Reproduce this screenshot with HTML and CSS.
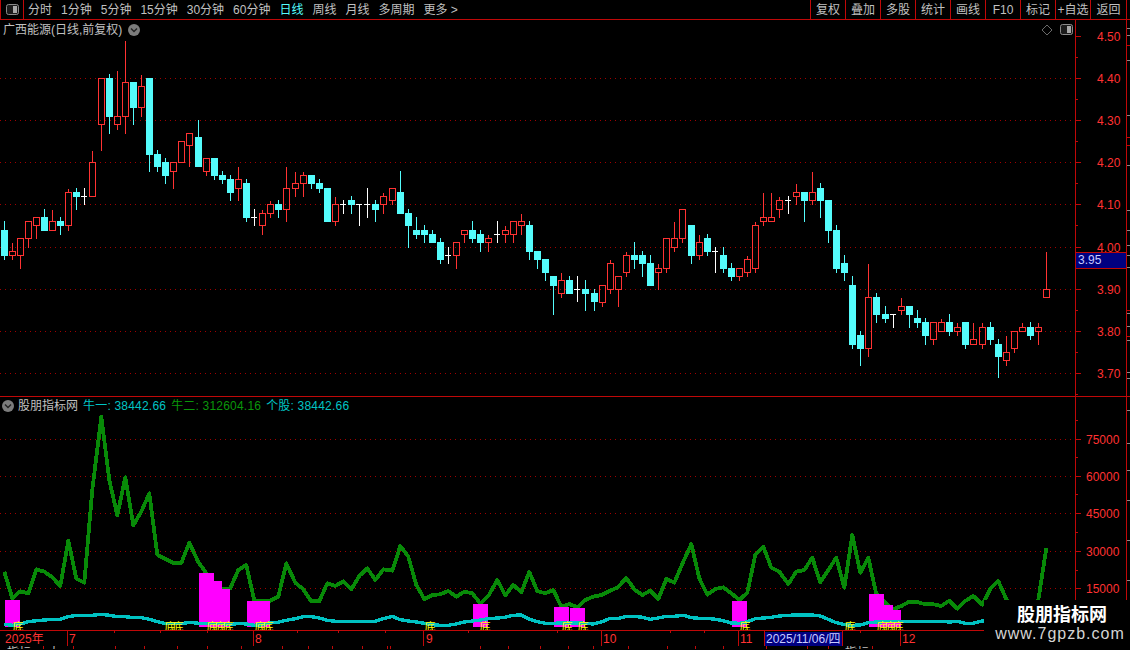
FILE: index.html
```html
<!DOCTYPE html>
<html lang="zh-CN">
<head>
<meta charset="utf-8">
<title>广西能源</title>
<link rel="stylesheet" href="styles.css">
</head>
<body>
<div class="app">
  <header class="toolbar">
    <div class="layout-cell">
      <svg class="layout-icon" width="13" height="11" viewBox="0 0 13 11"><rect x="0.5" y="0.5" width="12" height="10" rx="2" class="ic-frame"/><rect x="7" y="2" width="4" height="7" class="ic-fill"/></svg>
    </div>
    <nav class="periods">
      <span>分时</span><span>1分钟</span><span>5分钟</span><span>15分钟</span><span>30分钟</span><span>60分钟</span><span class="active">日线</span><span>周线</span><span>月线</span><span>多周期</span><span>更多 &gt;</span>
    </nav>
    <nav class="actions">
      <span>复权</span><span>叠加</span><span>多股</span><span>统计</span><span>画线</span><span>F10</span><span>标记</span><span>+自选</span><span>返回</span>
    </nav>
  </header>

  <section class="pane pane-price">
    <svg id="price-plot" class="plot" width="1075" height="376" viewBox="0 20 1075 376"></svg>
    <svg id="price-axis" class="axis" width="55" height="376" viewBox="1075 20 55 376"></svg>
    <div class="pane-title price-title">
      <span>广西能源(日线,前复权)</span>
      <svg class="chev" width="12" height="12" viewBox="0 0 12 12"><circle cx="6" cy="6" r="6" class="chev-bg"/><path d="M3 4.5 L6 7.5 L9 4.5" class="chev-line"/></svg>
    </div>
    <div class="pane-tools">
      <svg width="10" height="10" viewBox="0 0 10 10"><path d="M5 0 L10 5 L5 10 L0 5 Z" class="ic-diamond"/></svg>
      <svg width="13" height="11" viewBox="0 0 13 11"><rect x="0.5" y="0.5" width="12" height="10" rx="2" class="ic-frame"/><rect x="7" y="2" width="4" height="7" class="ic-fill"/></svg>
    </div>
    <div class="price-tag">3.95</div>
  </section>

  <section class="pane pane-ind">
    <svg id="ind-plot" class="plot" width="1075" height="233" viewBox="0 397 1075 233"></svg>
    <svg id="ind-axis" class="axis" width="55" height="233" viewBox="1075 397 55 233"></svg>
    <div class="pane-title ind-title">
      <svg class="chev" width="12" height="12" viewBox="0 0 12 12"><circle cx="6" cy="6" r="6" class="chev-bg"/><path d="M3 4.5 L6 7.5 L9 4.5" class="chev-line"/></svg>
      <span class="ind-name">股朋指标网</span>
      <span class="v-cyan">牛一: 38442.66</span>
      <span class="v-green">牛二: 312604.16</span>
      <span class="v-cyan">个股: 38442.66</span>
    </div>
  </section>

  <svg id="time-row" class="time-row" width="1130" height="15" viewBox="0 631 1130 15"></svg>
  <svg id="tab-row" class="tab-row" width="1130" height="3" viewBox="0 647 1130 3"></svg>

  <aside class="watermark">
    <div class="wm-name">股朋指标网</div>
    <div class="wm-url">www.7gpzb.com</div>
  </aside>
</div>
<script src="script.js"></script>
</body>
</html>
```
FILE: styles.css
```css
* { box-sizing: border-box; }
html, body { margin: 0; padding: 0; background: #000; }
body {
  width: 1130px;
  height: 650px;
  overflow: hidden;
  font-family: "Liberation Sans", "Noto Sans CJK SC", sans-serif;
  font-size: 12px;
  color: #c0c0c0;
}
.app { position: relative; width: 1130px; height: 650px; display: flex; flex-direction: column; background: #000; overflow: hidden; }

/* toolbar */
.toolbar { display: flex; align-items: stretch; height: 20px; border-bottom: 1px solid #c00808; padding-right: 3px; flex: none; }
.layout-cell { width: 24px; display: flex; align-items: center; justify-content: center; border-left: 1px solid #c00808; border-right: 1px solid #c00808; }
.periods { display: flex; align-items: center; gap: 9px; padding-left: 4px; padding-top: 2px; flex: 1; white-space: nowrap; line-height: 17px; }
.periods .active { color: #54fcfc; }
.actions { display: flex; line-height: 21px; }
.actions span { width: 35px; text-align: center; border-left: 1px solid #c00808; white-space: nowrap; }
.actions span:last-child { width: 37px; border-right: 1px solid #c00808; }
.ic-frame { fill: #1c1c1c; stroke: #8a8a8a; }
.ic-fill { fill: #a8a8a8; }
.ic-diamond { fill: none; stroke: #6a6a6a; }

/* panes */
.pane { position: relative; display: flex; flex: none; border-bottom: 1px solid #c00808; }
.pane-price { height: 377px; }
.pane-ind { height: 234px; }
.plot, .axis { display: block; flex: none; }
.pane-title { position: absolute; display: flex; align-items: center; line-height: 14px; white-space: nowrap; }
.price-title { left: 3px; top: 3px; gap: 6px; }
.ind-title { left: 2px; top: 2px; }
.ind-name { margin-left: 4px; margin-right: 5px; }
.ind-title .v-cyan, .ind-title .v-green { margin-right: 5px; letter-spacing: 0.2px; }
.v-cyan { color: #00c4c4; }
.v-green { color: #0a960a; }
.chev-bg { fill: #7c7c7c; }
.chev-line { fill: none; stroke: #222; stroke-width: 1.4; }
.pane-tools { position: absolute; left: 1042px; top: 4px; display: flex; align-items: center; gap: 8px; }
.pane-tools svg { display: block; }
.price-tag { position: absolute; left: 1075px; top: 232px; width: 52px; height: 17px; padding-left: 2px; line-height: 15px; background: #000080; border: 1px solid #c00808; color: #c8ccff; font-size: 12px; }

.time-row { display: block; flex: none; border: 0; }
.tab-row { display: block; flex: none; }

/* chart marks */
.grid { stroke: #a00000; stroke-width: 1; stroke-dasharray: 1 4; }
.ax { fill: #c00808; }
.ax-soft { fill: #8a8a8a; }
.up { fill: none; stroke: #ff3232; stroke-width: 1; }
.up-w { fill: #ff3232; }
.dn { fill: #54fcfc; }
.flat { fill: #ffffff; }
.lbl { fill: #ff3232; font-size: 12px; font-family: "Liberation Sans", "Noto Sans CJK SC", sans-serif; }
.lbl-date { fill: #c8ccff; font-size: 12px; font-family: "Liberation Sans", "Noto Sans CJK SC", sans-serif; }
.date-bg { fill: #000080; }
.tab-t { fill: #c0c0c0; font-size: 12px; font-family: "Noto Sans CJK SC", sans-serif; }
.line-green { fill: none; stroke: #088a08; stroke-width: 3.8; stroke-linejoin: round; }
.line-cyan { fill: none; stroke: #00c2c2; stroke-width: 3.4; stroke-linejoin: round; }
.bar { fill: #ff00ff; }
.di { fill: #ffff00; font-size: 11px; font-family: "Noto Sans CJK SC", sans-serif; text-anchor: middle; }

/* watermark */
.watermark { position: absolute; right: 0; bottom: 0; width: 146px; height: 50px; background: #000; text-align: center; }
.wm-name { margin-top: 2px; font-size: 18px; font-weight: 700; line-height: 22px; color: #fff; font-family: "Noto Sans CJK SC", sans-serif; padding-left: 10px; }
.wm-url { font-size: 16px; line-height: 20px; letter-spacing: 1px; color: #d4d4d4; font-family: "Liberation Sans", sans-serif; padding-left: 6px; }
```
FILE: script.js
```js
// Candles: [x, kind, bodyTop, bodyBottom, high, low] in 1/3-pixel units relative to each block's origin.
var blocks = [
  { x0: 0, y0: 30, c: [
    [13,'c',600,675,573,687],[37,'r',664,677,640,687],[61,'r',625,677,625,714],[85,'r',574,626,574,651],
    [109,'r',562,587,562,624],[133,'c',561,600,537,600],[157,'r',574,602,541,602],[181,'c',573,585,561,612],
    [205,'r',487,587,477,600],[229,'c',486,498,474,537],[253,'w',498,498,474,522],[277,'r',397,500,363,500],
    [304,'r',145,284,145,360],[328,'c',144,258,132,309],[352,'r',259,284,123,297],[376,'r',157,260,33,309],
    [400,'c',156,231,156,282],[424,'r',169,233,135,258],[448,'c',144,372,144,423],[472,'c',372,408,360,423],
    [496,'c',396,435,384,459],[520,'r',397,425,397,474],[544,'r',334,398,334,398],[568,'r',310,347,310,408],
    [595,'c',321,408,270,408],[619,'r',385,425,385,435],[643,'c',384,435,384,447],[667,'c',435,447,423,459],
    [691,'c',447,486,435,510],[715,'r',448,476,411,510],[739,'c',459,561,447,573],[763,'w',561,561,537,585],
    [787,'r',550,587,540,612],[811,'r',523,551,513,561],[835,'c',522,537,510,561],[859,'r',475,539,411,573],
    [886,'r',460,476,426,498]
  ]},
  { x0: 300, y0: 150, c: [
    [10,'r',76,101,66,138],[34,'c',75,99,75,114],[58,'c',99,114,87,126],[82,'c',114,213,114,213],
    [106,'r',163,215,141,225],[130,'w',162,162,150,189],[154,'c',150,162,138,189],[178,'w',163,163,163,225],
    [202,'w',163,163,114,201],[226,'c',162,177,150,213],[250,'r',139,164,129,189],[277,'r',115,152,115,162],
    [301,'c',126,189,63,189],[325,'c',189,225,177,291],[349,'c',240,252,201,264],[373,'c',240,252,225,276],
    [397,'c',252,276,240,276],[421,'c',276,327,264,339],[445,'w',316,316,291,339],[469,'r',277,317,277,354],
    [493,'r',241,254,241,276],[517,'c',240,264,213,276],[541,'c',252,276,240,303],[565,'r',265,278,255,303],
    [592,'w',253,253,213,276],[616,'r',241,254,228,276],[640,'r',214,254,214,276],[664,'r',214,227,192,252],
    [688,'c',225,303,213,327],[712,'c',303,327,303,354],[736,'c',327,366,327,390],[760,'c',378,405,378,492],
    [784,'r',391,431,369,441],[808,'c',390,429,378,429],[832,'w',418,418,378,453],[856,'c',417,429,390,480],
    [883,'c',429,453,417,480]
  ]},
  { x0: 600, y0: 160, c: [
    [7,'r',376,426,376,438],[31,'r',310,389,300,399],[55,'r',349,389,349,438],[79,'r',286,338,276,348],
    [103,'c',285,297,246,324],[127,'c',285,309,273,348],[151,'c',309,375,285,375],[175,'r',325,338,312,387],
    [199,'r',235,326,235,336],[223,'r',235,263,186,273],[247,'r',148,236,148,246],[274,'c',195,285,195,309],
    [298,'r',247,287,225,297],[322,'c',234,273,222,285],[346,'w',274,274,261,336],[370,'c',285,324,261,336],
    [394,'c',324,348,309,360],[418,'r',325,350,325,360],[442,'r',298,338,288,348],[466,'r',196,326,186,336],
    [490,'r',172,185,99,195],[514,'r',172,185,99,185],[538,'r',121,149,111,171],[565,'w',121,121,108,159],
    [589,'r',97,110,72,132],[613,'c',96,120,96,183],[637,'r',97,122,36,132],[661,'c',84,120,69,171],
    [685,'c',120,210,120,246],[709,'c',210,324,195,336],[733,'c',309,336,285,360],[757,'c',375,552,348,564]
  ]},
  { x0: 850, y0: 240, c: [
    [31,'c',285,324,273,375],[55,'r',172,326,72,348],[79,'c',171,222,159,246],[106,'c',222,234,198,246],
    [130,'w',223,223,223,261],[154,'r',199,212,174,222],[178,'c',198,222,198,261],[202,'c',234,246,210,261],
    [226,'c',246,285,234,312],[250,'r',247,299,247,312],[274,'r',247,275,237,275],[298,'c',246,273,222,285],
    [322,'r',262,275,250,285],[346,'c',246,312,246,324],[370,'r',298,314,249,314],[397,'r',262,314,250,324],
    [421,'c',261,297,246,312],[445,'c',312,348,297,411],[469,'r',337,362,288,375],[493,'r',274,326,274,336],
    [517,'r',262,275,250,275],[541,'c',261,285,246,297],[565,'r',262,275,250,312],[589,'r',148,173,36,173]
  ]}
];

// Indicator lines: flat [x, y, ...] lists in 1/3-pixel units relative to each block's origin.
var greenBlocks = [
  { x0: 0, y0: 390, p: [13,545,37,625,61,604,85,610,109,538,133,545,157,562,181,588,205,452,229,566,253,578,277,300,304,80,328,270,352,376,376,262,400,406,424,365,448,310,472,494,496,507,520,519,544,519,568,458,595,516,619,550,643,585,667,598,691,595,715,540,739,525,763,632,787,634,811,632,835,620,859,520,886,578,910,598,934,634,958,634,982,580,1006,588,1030,574,1054,598,1078,558,1102,535,1126,570] },
  { x0: 380, y0: 520, p: [10,148,37,152,61,78,85,110,109,195,133,237,157,225,181,223,205,213,229,230,253,215,277,220,301,250,325,228,352,180,376,226,400,195,424,217,448,156,472,213,496,220,520,210,544,260,568,252,592,262,616,240,640,230,664,225,688,213,712,203,739,174,763,208,787,225,811,212,835,237,859,177,883,188,910,125,934,72,958,175,982,224,1006,207,1030,202,1054,220,1078,240,1102,218] },
  { x0: 750, y0: 520, p: [16,105,40,80,64,143,88,155,115,192,139,155,163,150,187,113,211,187,235,150,259,113,283,203,307,45,331,158,355,113,379,222,406,248,430,268,454,258,478,245,502,246,526,253,550,253,574,258,598,242,622,266,646,243,670,228,697,254,721,207,745,183,769,238,793,270,817,270,841,270,865,240,889,85] }
];
var cyanBlocks = [
  { x0: 0, y0: 390, p: [13,703,37,706,61,702,85,695,109,692,133,690,157,688,181,688,205,680,229,676,253,676,277,676,304,673,328,676,352,680,376,680,400,683,424,683,448,688,472,695,496,701,520,701,544,701,568,697,595,700,619,700,643,700,667,701,691,704,715,700,739,702,763,706,787,704,811,698,835,697,859,691,886,686,910,680,934,680,958,684,982,691,1006,694,1030,694,1054,694,1078,694,1102,694,1126,694] },
  { x0: 380, y0: 520, p: [10,296,37,289,61,299,85,303,109,306,133,310,157,314,181,316,205,316,229,312,253,306,277,303,301,300,325,296,352,294,376,292,400,286,424,285,448,298,472,305,496,310,520,310,544,309,568,309,592,309,616,310,640,312,664,306,688,296,712,296,739,289,763,289,787,292,811,298,835,294,859,289,883,289,910,286,934,293,958,295,982,295,1006,298,1030,302,1054,309,1078,310,1102,305] },
  { x0: 750, y0: 520, p: [16,296,40,294,64,292,88,288,115,286,139,285,163,285,187,285,211,288,235,298,259,308,283,314,307,316,331,315,355,308,379,306,406,305,430,304,454,304,478,304,502,304,526,304,550,304,574,304,598,306,622,304,646,310,670,310,697,303,730,303] }
];

function rect(x, y, w, h, cls) {
  return '<rect x="' + x + '" y="' + y + '" width="' + w + '" height="' + h + '" class="' + cls + '" shape-rendering="crispEdges"/>';
}
function hgrid(y, x2) {
  return '<line x1="0" x2="' + x2 + '" y1="' + (y + 0.5) + '" y2="' + (y + 0.5) + '" class="grid" shape-rendering="crispEdges"/>';
}
function label(x, y, t, cls) {
  return '<text x="' + x + '" y="' + y + '" class="' + (cls || 'lbl') + '">' + t + '</text>';
}
function poly(blocksList, cls) {
  var pts = [];
  blocksList.forEach(function (b) {
    for (var i = 0; i < b.p.length; i += 2) {
      pts.push((b.x0 + b.p[i] / 3).toFixed(1) + ',' + (b.y0 + b.p[i + 1] / 3).toFixed(1));
    }
  });
  return '<polyline points="' + pts.join(' ') + '" class="' + cls + '" shape-rendering="crispEdges"/>';
}

// price plot
var html = '';
[78, 120, 162, 204, 247, 289, 331, 373].forEach(function (y) { html += hgrid(y, 1075); });
blocks.forEach(function (b) {
  b.c.forEach(function (k) {
    var x = b.x0 + Math.floor(k[0] / 3);
    var t = b.y0 + Math.floor(k[2] / 3), bo = b.y0 + Math.floor(k[3] / 3);
    var hi = b.y0 + Math.floor(k[4] / 3), lo = b.y0 + Math.floor(k[5] / 3);
    if (k[1] === 'c') {
      html += rect(x, hi, 1, lo - hi + 1, 'dn') + rect(x - 3, t, 7, bo - t + 1, 'dn');
    } else if (k[1] === 'w') {
      html += rect(x, hi, 1, lo - hi + 1, 'flat') + rect(x - 3, t, 6, 1, 'flat');
    } else {
      if (hi < t) html += rect(x, hi, 1, t - hi, 'up-w');
      if (lo > bo) html += rect(x, bo, 1, lo - bo + 1, 'up-w');
      html += '<rect x="' + (x - 2.5) + '" y="' + (t + 0.5) + '" width="6" height="' + (bo - t) + '" class="up" shape-rendering="crispEdges"/>';
    }
  });
});
document.getElementById('price-plot').innerHTML = html;

// price axis
var ax = rect(1075, 20, 1, 376, 'ax') + rect(1126, 20, 1, 376, 'ax');
[[4.50, 36], [4.40, 78], [4.30, 120], [4.20, 162], [4.10, 204], [4.00, 247], [3.90, 289], [3.80, 331], [3.70, 373]].forEach(function (m) {
  ax += rect(1076, m[1], 5, 1, 'ax') + label(1097, m[1] + 5, m[0].toFixed(2));
});
[57, 99, 141, 183, 225, 268, 310, 352, 394].forEach(function (y) { ax += rect(1076, y, 2, 1, 'ax'); });
[45, 137, 145, 310, 336].forEach(function (y) { ax += rect(1127, y, 3, 1, 'ax'); });
[28, 35, 60, 115, 165, 210, 230, 245, 255, 267, 313, 326, 340, 372, 378].forEach(function (y) { ax += rect(1127, y, 3, 1, 'ax-soft'); });
document.getElementById('price-axis').innerHTML = ax;

// indicator plot
var ind = '';
[439, 476, 513, 551, 588].forEach(function (y) { ind += hgrid(y, 1075); });
ind += poly(greenBlocks, 'line-green');
[[5, 600, 15], [199, 573, 15], [214, 581, 8], [222, 589, 8], [247, 601, 23], [473, 604, 15], [554, 607, 15], [570, 608, 15], [732, 601, 15], [869, 594, 15], [884, 605, 9], [893, 610, 8]].forEach(function (b) {
  ind += rect(b[0], b[1], b[2], 627 - b[1], 'bar');
});
ind += poly(cyanBlocks, 'line-cyan');
[18, 170, 178, 212, 220, 228, 260, 268, 430, 485, 567, 583, 745, 850, 882, 890, 898].forEach(function (x) {
  ind += label(x, 631, '底', 'di');
});
document.getElementById('ind-plot').innerHTML = ind;

// indicator axis
var ax2 = rect(1075, 397, 1, 233, 'ax') + rect(1126, 397, 1, 233, 'ax');
[[75000, 439], [60000, 476], [45000, 513], [30000, 551], [15000, 588]].forEach(function (m) {
  ax2 += rect(1076, m[1], 5, 1, 'ax') + label(1086, m[1] + 5, m[0]);
});
[420, 457, 494, 532, 570, 607].forEach(function (y) { ax2 += rect(1076, y, 2, 1, 'ax'); });
[410, 443, 470, 500, 540, 580].forEach(function (y) { ax2 += rect(1127, y, 3, 1, 'ax-soft'); });
document.getElementById('ind-axis').innerHTML = ax2;

// time row
var tr = '';
[67, 253, 423, 601, 738, 900].forEach(function (x) { tr += rect(x, 631, 1, 15, 'ax'); });
[114, 160, 207, 297, 338, 385, 468, 557, 670, 704, 860].forEach(function (x) { tr += rect(x, 631, 1, 2, 'ax'); });
tr += label(5, 643, '2025年') + label(69, 643, '7') + label(255, 643, '8') + label(426, 643, '9') + label(603, 643, '10') + label(740, 643, '11') + label(902, 643, '12');
tr += rect(764, 631, 1, 15, 'ax') + rect(842, 631, 1, 15, 'ax') + rect(765, 632, 77, 14, 'date-bg');
tr += label(766, 643, '2025/11/06/四', 'lbl-date');
document.getElementById('time-row').innerHTML = tr;

// tab strip under the time row
var tabs = '';
[43, 73, 115, 144, 177, 207, 241, 282, 308, 332, 362, 387, 390, 480, 508, 540, 568, 593, 628, 667, 695, 723, 766, 807, 828, 872].forEach(function (x) { tabs += rect(x, 647, 1, 3, 'ax'); });
tabs += label(7, 658, '指标', 'tab-t') + label(48, 658, '大', 'tab-t') + label(845, 658, '指标', 'tab-t');
document.getElementById('tab-row').innerHTML = tabs;
```
